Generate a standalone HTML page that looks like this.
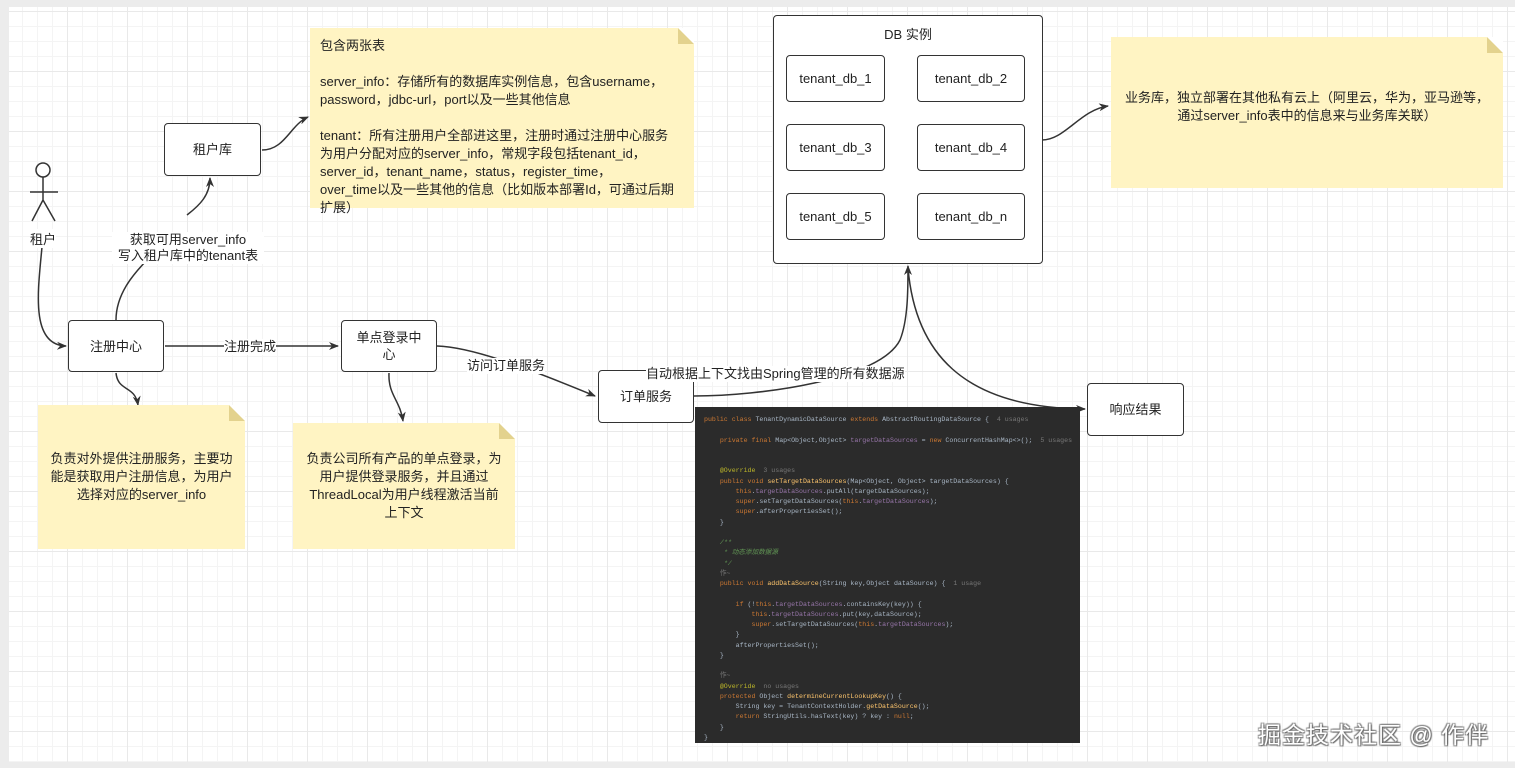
<!DOCTYPE html>
<html><head><meta charset="utf-8"><style>
*{margin:0;padding:0;box-sizing:border-box}
body{width:1515px;height:768px;overflow:hidden;background:#ececec;position:relative;font-family:"Liberation Sans","Noto Sans CJK SC",sans-serif;color:#222}
#cv{position:absolute;left:9px;top:7px;width:1506px;height:755px;background-color:#fff;
background-image:linear-gradient(#e9e9e9 1px,transparent 1px),linear-gradient(90deg,#e9e9e9 1px,transparent 1px),linear-gradient(#f4f4f4 1px,transparent 1px),linear-gradient(90deg,#f4f4f4 1px,transparent 1px);
background-size:60px 60px,60px 60px,15px 15px,15px 15px;background-position:-2px 4px}
.box{position:absolute;border:1.5px solid #333;border-radius:4px;background:#fff;display:flex;align-items:center;justify-content:center;text-align:center;font-size:13px;line-height:17px}
.note{position:absolute;background:#fff4c3;font-size:13px;line-height:18px;color:#222}
.note:after{content:"";position:absolute;right:0;top:0;border-style:solid;border-width:0 16px 16px 0;border-color:#fff #fff #e3d28e #e3d28e}
.c{display:flex;align-items:center;justify-content:center;text-align:center}
.lbl{position:absolute;font-size:13px;background:#fff;line-height:16px;text-align:center;white-space:nowrap}
#code{position:absolute;left:695px;top:407px;width:385px;height:336px;background:#2b2b2b;font-family:"Liberation Mono",monospace;font-size:6.6px;line-height:10.25px;color:#a9b7c6;padding:8px 0 0 9px;white-space:pre;overflow:hidden}
.k{color:#cc7832}.f{color:#ffc66d}.v{color:#9876aa}.a{color:#bbb529}.g{color:#777}.m{color:#629755;font-style:italic}
#wm{position:absolute;left:1258px;top:716px;font-size:23px;color:#fff;text-shadow:1px 1px 1px #666,-1px -1px 1px #888,1px -1px 1px #888,-1px 1px 1px #888;letter-spacing:1px}
</style></head><body>
<div id="cv"></div>
<svg style="position:absolute;left:0;top:0" width="1515" height="768">
<defs><marker id="ar" markerWidth="10" markerHeight="8" refX="9" refY="4" orient="auto" markerUnits="userSpaceOnUse"><path d="M0,0 L10,4 L0,8 L3,4z" fill="#333"/></marker></defs>
<g stroke="#333" stroke-width="1.5" fill="none">
<circle cx="43" cy="170" r="7"/>
<path d="M43 177 V200 M30 192 H58 M43 200 L32 221 M43 200 L55 221"/>
<path d="M42 247 C38 290 30 345 66 346" marker-end="url(#ar)"/>
<path d="M116 320 C116 290 140 268 145 262"/>
<path d="M187 215 C200 205 210 195 210 178" marker-end="url(#ar)"/>
<path d="M262 150 C285 150 290 125 308 117" marker-end="url(#ar)"/>
<path d="M165 346 H338" marker-end="url(#ar)"/>
<path d="M437 346 C470 347 520 365 595 396" marker-end="url(#ar)"/>
<path d="M116 373 C118 392 135 385 138 405" marker-end="url(#ar)"/>
<path d="M389 373 C388 395 400 400 403 421" marker-end="url(#ar)"/>
<path d="M694 396 C760 396 880 380 900 340 C908 320 908 290 908 266" marker-end="url(#ar)"/>
<path d="M908 268 C915 350 960 408 1085 409" marker-end="url(#ar)"/>
<path d="M1042 140 C1065 140 1080 110 1108 106" marker-end="url(#ar)"/>
</g></svg>
<div style="position:absolute;left:30px;top:229px;font-size:13px;background:#fff">租户</div>
<div class="box" style="left:164px;top:123px;width:97px;height:53px">租户库</div>
<div class="lbl" style="left:112px;top:232px;width:152px">获取可用server_info<br>写入租户库中的tenant表</div>
<div class="note" style="left:310px;top:28px;width:384px;height:180px;padding:9px 10px;white-space:pre">包含两张表

server_info：存储所有的数据库实例信息，包含username，
password，jdbc-url，port以及一些其他信息

tenant：所有注册用户全部进这里，注册时通过注册中心服务
为用户分配对应的server_info，常规字段包括tenant_id，
server_id，tenant_name，status，register_time，
over_time以及一些其他的信息（比如版本部署Id，可通过后期
扩展）</div>
<div class="box" style="left:773px;top:15px;width:270px;height:249px;align-items:flex-start;padding-top:10px">DB 实例</div>
<div class="box" style="left:786px;top:55px;width:99px;height:47px">tenant_db_1</div>
<div class="box" style="left:917px;top:55px;width:108px;height:47px">tenant_db_2</div>
<div class="box" style="left:786px;top:124px;width:99px;height:47px">tenant_db_3</div>
<div class="box" style="left:917px;top:124px;width:108px;height:47px">tenant_db_4</div>
<div class="box" style="left:786px;top:193px;width:99px;height:47px">tenant_db_5</div>
<div class="box" style="left:917px;top:193px;width:108px;height:47px">tenant_db_n</div>
<div class="note c" style="left:1111px;top:37px;width:392px;height:151px;padding-bottom:12px">业务库，独立部署在其他私有云上（阿里云，华为，亚马逊等，<br>通过server_info表中的信息来与业务库关联）</div>
<div class="box" style="left:68px;top:320px;width:96px;height:52px">注册中心</div>
<div class="lbl" style="left:224px;top:339px">注册完成</div>
<div class="box" style="left:341px;top:320px;width:96px;height:52px">单点登录中<br>心</div>
<div class="lbl" style="left:467px;top:358px">访问订单服务</div>
<div class="box" style="left:598px;top:370px;width:96px;height:53px">订单服务</div>
<div class="lbl" style="left:646px;top:366px">自动根据上下文找由Spring管理的所有数据源</div>
<div class="box" style="left:1087px;top:383px;width:97px;height:53px">响应结果</div>
<div class="note c" style="left:38px;top:405px;width:207px;height:144px;padding:0 10px 0">负责对外提供注册服务，主要功能是获取用户注册信息，为用户选择对应的server_info</div>
<div class="note c" style="left:293px;top:423px;width:222px;height:126px;padding:0 12px 0">负责公司所有产品的单点登录，为用户提供登录服务，并且通过ThreadLocal为用户线程激活当前上下文</div>
<div id="code"><span class="k">public class</span> TenantDynamicDataSource <span class="k">extends</span> AbstractRoutingDataSource {  <span class="g">4 usages</span>

    <span class="k">private final</span> Map&lt;Object,Object&gt; <span class="v">targetDataSources</span> = <span class="k">new</span> ConcurrentHashMap&lt;&gt;();  <span class="g">5 usages</span>


    <span class="a">@Override</span>  <span class="g">3 usages</span>
    <span class="k">public void</span> <span class="f">setTargetDataSources</span>(Map&lt;Object, Object&gt; targetDataSources) {
        <span class="k">this</span>.<span class="v">targetDataSources</span>.putAll(targetDataSources);
        <span class="k">super</span>.setTargetDataSources(<span class="k">this</span>.<span class="v">targetDataSources</span>);
        <span class="k">super</span>.afterPropertiesSet();
    }

    <span class="m">/**
     * 动态添加数据源
     */</span>
    <span class="g">作~</span>
    <span class="k">public void</span> <span class="f">addDataSource</span>(String key,Object dataSource) {  <span class="g">1 usage</span>

        <span class="k">if</span> (!<span class="k">this</span>.<span class="v">targetDataSources</span>.containsKey(key)) {
            <span class="k">this</span>.<span class="v">targetDataSources</span>.put(key,dataSource);
            <span class="k">super</span>.setTargetDataSources(<span class="k">this</span>.<span class="v">targetDataSources</span>);
        }
        afterPropertiesSet();
    }

    <span class="g">作~</span>
    <span class="a">@Override</span>  <span class="g">no usages</span>
    <span class="k">protected</span> Object <span class="f">determineCurrentLookupKey</span>() {
        String key = TenantContextHolder.<span class="f">getDataSource</span>();
        <span class="k">return</span> StringUtils.hasText(key) ? key : <span class="k">null</span>;
    }
}</div>
<div id="wm">掘金技术社区 @ 作伴</div>
</body></html>
